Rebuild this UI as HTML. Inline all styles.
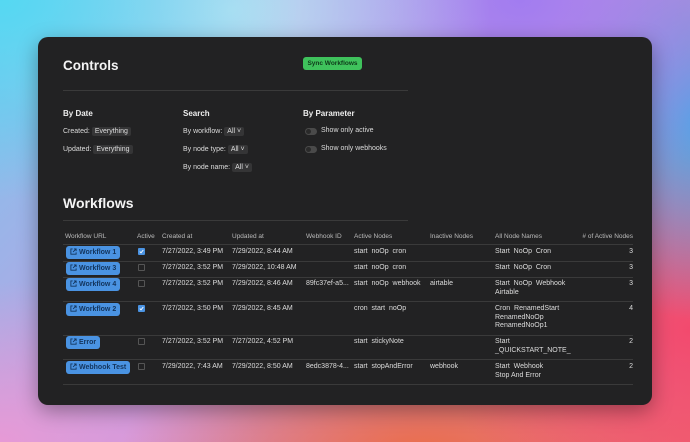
<!DOCTYPE html>
<html><head><meta charset="utf-8"><style>
*{margin:0;padding:0;box-sizing:border-box}
body{width:690px;height:442px;overflow:hidden;font-family:"Liberation Sans",sans-serif;position:relative;
background:
radial-gradient(ellipse 300px 200px at 0px 0px,#55d8f2 0%,rgba(85,216,242,0) 100%),
radial-gradient(ellipse 260px 180px at 230px 10px,#bfe0f2 0%,rgba(191,224,242,0) 100%),
radial-gradient(ellipse 280px 200px at 520px 0px,#a27cf0 0%,rgba(162,124,240,0) 100%),
radial-gradient(ellipse 160px 200px at 700px 120px,#4fa6e6 0%,rgba(79,166,230,0) 100%),
radial-gradient(ellipse 250px 220px at 690px 330px,#f24a6e 0%,rgba(242,74,110,0) 100%),
radial-gradient(ellipse 300px 120px at 420px 450px,#ea6e4c 0%,rgba(234,110,76,0) 100%),
radial-gradient(ellipse 260px 160px at 0px 442px,#e79ad6 0%,rgba(231,154,214,0) 100%),
linear-gradient(135deg,#7cc6ee,#c79ae0 50%,#ef6a74);}
.card{position:absolute;left:38px;top:37px;width:614px;height:368px;background:#222223;border-radius:10px;box-shadow:0 6px 20px rgba(0,0,0,.35)}
.a{position:absolute;white-space:nowrap;color:#dcdcdc;font-size:7px}
h1{position:absolute;color:#f4f4f4;font-size:13.5px;font-weight:bold}
h3{position:absolute;color:#eee;font-size:8px;font-weight:bold}
.hr{position:absolute;height:1px;background:#3a3a3a}
.pill{display:inline-block;background:#353536;border-radius:2px;padding:1px 3px;margin-left:2px;color:#ddd}
.tg{position:absolute;width:12px;height:7px;border-radius:4px;background:#4a4a4a}
.tg:after{content:"";position:absolute;left:1px;top:1px;width:5px;height:5px;border-radius:50%;background:#2a2a2a}
.btn{position:absolute;left:28px;height:13px;background:#4a93e2;border-radius:3px;color:#13345c;font-size:7px;font-weight:bold;line-height:13px;padding:0 4px 0 4px;white-space:nowrap}
.btn svg{vertical-align:-1px;margin-right:2px}
.cb{position:absolute;left:100px;width:7px;height:7px;border:1px solid #555;border-radius:1px}
.cb.on{background:#4a93e2;border-color:#4a93e2}
.cb svg{position:absolute;left:0;top:0}
.th{color:#bbb;font-size:6.5px}
</style></head><body>
<div class="card">
<h1 style="left:25px;top:21px">Controls</h1>
<div style="position:absolute;left:265px;top:20px;width:59px;height:13px;background:#3fc25c;border-radius:3px;color:#0f3a1a;font-size:6.5px;font-weight:bold;text-align:center;line-height:13px">Sync Workflows</div>
<div class="hr" style="left:25px;top:53px;width:345px"></div>
<h3 style="left:25px;top:72px">By Date</h3>
<h3 style="left:145px;top:72px">Search</h3>
<h3 style="left:265px;top:72px">By Parameter</h3>
<div class="a" style="left:25px;top:90px">Created:<span class="pill">Everything</span></div>
<div class="a" style="left:25px;top:108px">Updated:<span class="pill">Everything</span></div>
<div class="a" style="left:145px;top:90px">By workflow:<span class="pill">All ˅</span></div>
<div class="a" style="left:145px;top:108px">By node type:<span class="pill">All ˅</span></div>
<div class="a" style="left:145px;top:126px">By node name:<span class="pill">All ˅</span></div>
<div class="tg" style="left:267px;top:91px"></div><div class="a" style="left:283px;top:90px">Show only active</div>
<div class="tg" style="left:267px;top:109px"></div><div class="a" style="left:283px;top:108px">Show only webhooks</div>
<h1 style="left:25px;top:158px;font-size:14px">Workflows</h1>
<div class="hr" style="left:25px;top:183px;width:345px"></div>

<div class="a th" style="left:27px;top:196px">Workflow URL</div>
<div class="a th" style="left:99px;top:196px">Active</div>
<div class="a th" style="left:124px;top:196px">Created at</div>
<div class="a th" style="left:194px;top:196px">Updated at</div>
<div class="a th" style="left:268px;top:196px">Webhook ID</div>
<div class="a th" style="left:316px;top:196px">Active Nodes</div>
<div class="a th" style="left:392px;top:196px">Inactive Nodes</div>
<div class="a th" style="left:457px;top:196px">All Node Names</div>
<div class="a th" style="right:19px;top:196px"># of Active Nodes</div>

<div class="hr" style="left:25px;top:207px;width:570px"></div>
<div class="hr" style="left:25px;top:224px;width:570px"></div>
<div class="hr" style="left:25px;top:240px;width:570px"></div>
<div class="hr" style="left:25px;top:264px;width:570px"></div>
<div class="hr" style="left:25px;top:298px;width:570px"></div>
<div class="hr" style="left:25px;top:322px;width:570px"></div>
<div class="hr" style="left:25px;top:347px;width:570px"></div>

<div class="btn" style="top:209px"><svg width="7" height="7" viewBox="0 0 8 8"><path d="M3 1H1v6h6V5M4.5 1H7v2.5M7 1L3.5 4.5" fill="none" stroke="#13345c" stroke-width="1"/></svg>Workflow 1</div>
<div class="cb on" style="top:211px"><svg width="5" height="5" viewBox="0 0 5 5"><path d="M0.8 2.6L2 3.8L4.3 1" fill="none" stroke="#fff" stroke-width="0.9"/></svg></div>
<div class="a" style="left:124px;top:211px">7/27/2022, 3:49 PM</div><div class="a" style="left:194px;top:211px">7/29/2022, 8:44 AM</div>
<div class="a" style="left:316px;top:211px">start&nbsp; noOp&nbsp; cron</div><div class="a" style="left:457px;top:211px">Start&nbsp; NoOp&nbsp; Cron</div><div class="a" style="right:19px;top:211px">3</div>

<div class="btn" style="top:225px"><svg width="7" height="7" viewBox="0 0 8 8"><path d="M3 1H1v6h6V5M4.5 1H7v2.5M7 1L3.5 4.5" fill="none" stroke="#13345c" stroke-width="1"/></svg>Workflow 3</div>
<div class="cb" style="top:227px"></div>
<div class="a" style="left:124px;top:227px">7/27/2022, 3:52 PM</div><div class="a" style="left:194px;top:227px">7/29/2022, 10:48 AM</div>
<div class="a" style="left:316px;top:227px">start&nbsp; noOp&nbsp; cron</div><div class="a" style="left:457px;top:227px">Start&nbsp; NoOp&nbsp; Cron</div><div class="a" style="right:19px;top:227px">3</div>

<div class="btn" style="top:241px"><svg width="7" height="7" viewBox="0 0 8 8"><path d="M3 1H1v6h6V5M4.5 1H7v2.5M7 1L3.5 4.5" fill="none" stroke="#13345c" stroke-width="1"/></svg>Workflow 4</div>
<div class="cb" style="top:243px"></div>
<div class="a" style="left:124px;top:243px">7/27/2022, 3:52 PM</div><div class="a" style="left:194px;top:243px">7/29/2022, 8:46 AM</div>
<div class="a" style="left:268px;top:243px">89fc37ef-a5...</div>
<div class="a" style="left:316px;top:243px">start&nbsp; noOp&nbsp; webhook</div><div class="a" style="left:392px;top:243px">airtable</div>
<div class="a" style="left:457px;top:243px;line-height:8.5px">Start&nbsp; NoOp&nbsp; Webhook<br>Airtable</div><div class="a" style="right:19px;top:243px">3</div>

<div class="btn" style="top:266px"><svg width="7" height="7" viewBox="0 0 8 8"><path d="M3 1H1v6h6V5M4.5 1H7v2.5M7 1L3.5 4.5" fill="none" stroke="#13345c" stroke-width="1"/></svg>Workflow 2</div>
<div class="cb on" style="top:268px"><svg width="5" height="5" viewBox="0 0 5 5"><path d="M0.8 2.6L2 3.8L4.3 1" fill="none" stroke="#fff" stroke-width="0.9"/></svg></div>
<div class="a" style="left:124px;top:268px">7/27/2022, 3:50 PM</div><div class="a" style="left:194px;top:268px">7/29/2022, 8:45 AM</div>
<div class="a" style="left:316px;top:268px">cron&nbsp; start&nbsp; noOp</div>
<div class="a" style="left:457px;top:268px;line-height:8.5px">Cron&nbsp; RenamedStart<br>RenamedNoOp<br>RenamedNoOp1</div><div class="a" style="right:19px;top:268px">4</div>

<div class="btn" style="top:299px"><svg width="7" height="7" viewBox="0 0 8 8"><path d="M3 1H1v6h6V5M4.5 1H7v2.5M7 1L3.5 4.5" fill="none" stroke="#13345c" stroke-width="1"/></svg>Error</div>
<div class="cb" style="top:301px"></div>
<div class="a" style="left:124px;top:301px">7/27/2022, 3:52 PM</div><div class="a" style="left:194px;top:301px">7/27/2022, 4:52 PM</div>
<div class="a" style="left:316px;top:301px">start&nbsp; stickyNote</div>
<div class="a" style="left:457px;top:301px;line-height:8.5px">Start<br>_QUICKSTART_NOTE_</div><div class="a" style="right:19px;top:301px">2</div>

<div class="btn" style="top:324px"><svg width="7" height="7" viewBox="0 0 8 8"><path d="M3 1H1v6h6V5M4.5 1H7v2.5M7 1L3.5 4.5" fill="none" stroke="#13345c" stroke-width="1"/></svg>Webhook Test</div>
<div class="cb" style="top:326px"></div>
<div class="a" style="left:124px;top:326px">7/29/2022, 7:43 AM</div><div class="a" style="left:194px;top:326px">7/29/2022, 8:50 AM</div>
<div class="a" style="left:268px;top:326px">8edc3878-4...</div>
<div class="a" style="left:316px;top:326px">start&nbsp; stopAndError</div><div class="a" style="left:392px;top:326px">webhook</div>
<div class="a" style="left:457px;top:326px;line-height:8.5px">Start&nbsp; Webhook<br>Stop And Error</div><div class="a" style="right:19px;top:326px">2</div>
</div>
</body></html>
